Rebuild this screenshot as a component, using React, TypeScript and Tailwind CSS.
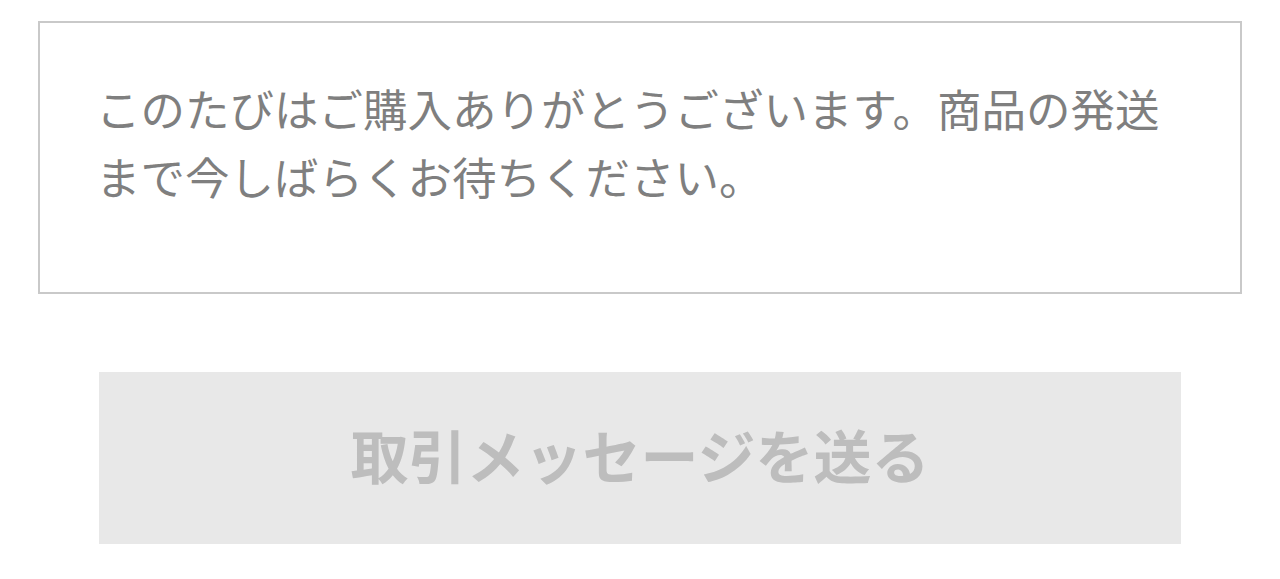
export default function App() {
  return (
    <div
      className="min-h-[579px] w-full bg-white pt-[21px]"
      style={{ fontFamily: '"Noto Sans CJK JP", "Noto Sans", sans-serif' }}
    >
      {/* Thank-you notice */}
      <div className="mx-[38px] border-2 border-[#c9c9c9] pl-[56px] pr-[56px] pt-[51px] pb-[82px]">
        <p className="text-[44.5px] leading-[68px] text-[#7f7f7f]">
          このたびはご購入ありがとうございます。商品の発送まで今しばらくお待ちください。
        </p>
      </div>

      {/* Disabled send button */}
      <div className="mx-[99px] mt-[78px]">
        <button
          disabled
          className="flex h-[172px] w-full items-center justify-center bg-[#e8e8e8] pb-[8px] text-[58px] font-bold text-[#bdbdbd]"
        >
          取引メッセージを送る
        </button>
      </div>
    </div>
  );
}
